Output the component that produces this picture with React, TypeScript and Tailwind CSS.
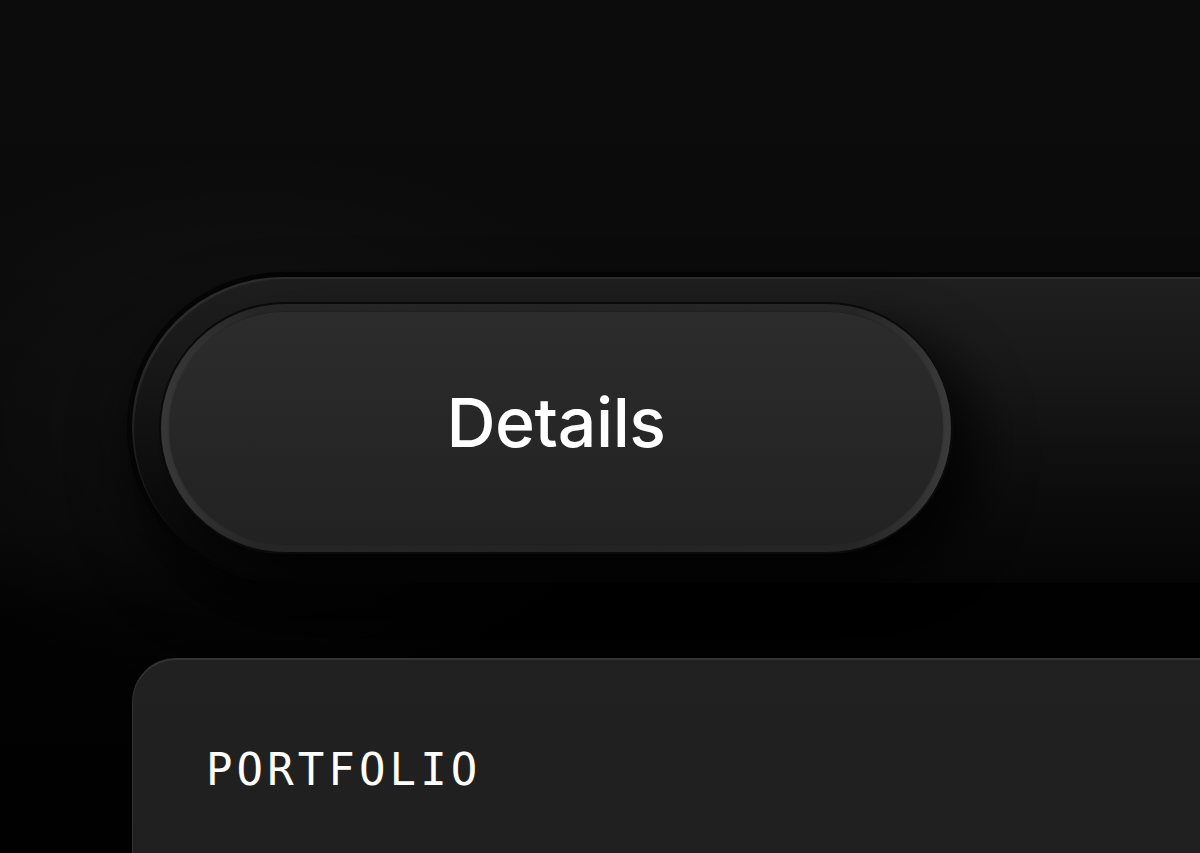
import React from "react";

export default function App() {
  return (
    <div className="relative h-[853px] w-[1200px] overflow-hidden bg-[linear-gradient(180deg,#0c0c0c_0%,#0b0b0b_30%,#070707_62%,#020202_72%,#010101_100%)]">
      {/* soft glow behind the switch */}
      <div className="pointer-events-none absolute left-[-200px] top-[120px] h-[600px] w-[900px] rounded-full bg-[radial-gradient(ellipse_at_center,rgba(255,255,255,0.035)_0%,rgba(255,255,255,0)_65%)]" />
      <div className="relative flex flex-col pl-[132px] pt-[277px]">
        {/* track */}
        <div className="w-[1200px] rounded-l-full shadow-[0_0_0_5px_#050505,0_30px_60px_rgba(0,0,0,0.7)]">
          <div className="flex h-[301px] items-center rounded-l-full bg-[linear-gradient(180deg,#1f1f1f_0%,#171717_35%,#0b0b0b_75%,#060606_100%)] pl-[27px] shadow-[inset_2px_2px_1px_rgba(255,255,255,0.07)]">
            {/* button */}
            <div className="h-[252px] w-[794px] rounded-full border-2 border-[#0a0a0a] bg-[linear-gradient(90deg,#383838_0%,#262626_12%,#232323_50%,#262626_88%,#3a3a3a_100%)] p-[8px] shadow-[30px_25px_50px_rgba(0,0,0,0.75)]">
              <div className="flex h-full w-full items-center justify-center rounded-full bg-[linear-gradient(180deg,#2c2c2c_0%,#272727_50%,#222222_100%)] shadow-[0_0_2px_rgba(0,0,0,0.4)]">
                <span className="mt-[-12px] font-['Inter','Noto_Sans',sans-serif] text-[68px] font-medium leading-none tracking-[-0.4px] text-white">
                  Details
                </span>
              </div>
            </div>
          </div>
        </div>
        {/* card */}
        <div className="mt-[80px] h-[300px] w-[1200px] rounded-tl-[44px] border-t-2 border-l border-[#333333] bg-[linear-gradient(180deg,#212121_0%,#1f1f1f_100%)] pl-[73px] pt-[88px]">
          <span className="font-['DejaVu_Sans_Mono','Liberation_Mono',monospace] text-[44px] leading-none tracking-[4.1px] text-white">
            PORTFOLIO
          </span>
        </div>
      </div>
    </div>
  );
}
